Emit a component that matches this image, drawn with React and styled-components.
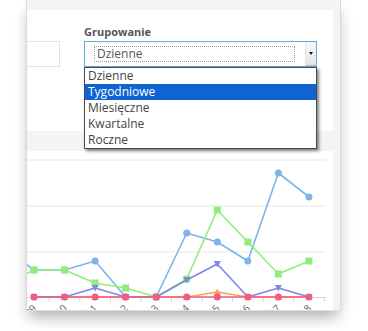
import React from "react";
import styled, { createGlobalStyle } from "styled-components";

const GlobalStyle = createGlobalStyle`
  html, body {
    margin: 0;
    padding: 0;
    background: #fff;
  }
  body {
    font-family: "Open Sans", "Liberation Sans", sans-serif;
  }
`;

const Stage = styled.div`
  width: 368px;
  height: 331px;
  overflow: hidden;
  background: #fff;
  padding-left: 26px;
  box-sizing: border-box;
`;

const Panel = styled.div`
  width: 315px;
  height: 311px;
  box-sizing: border-box;
  border-left: 1px solid #d8d8d8;
  border-right: 1px solid #d8d8d8;
  border-bottom: 1px solid #e0e0e0;
  background: #f4f4f4;
  box-shadow: 0 9px 14px -3px rgba(0, 0, 0, 0.32);
  padding: 10px 7px 0 0;
  display: flex;
  flex-direction: column;
  gap: 20px;
`;

const FilterCard = styled.div`
  height: 121px;
  flex-shrink: 0;
  background: #fff;
  display: flex;
  align-items: flex-start;
  gap: 24px;
  padding-top: 14px;
  box-sizing: border-box;
`;

const Field = styled.div`
  display: flex;
  flex-direction: column;
  gap: 2px;
  position: relative;
`;

const Label = styled.label`
  font-size: 11px;
  font-weight: 700;
  line-height: 15px;
  color: #555;
`;

const TextInput = styled.div`
  width: 33px;
  height: 26px;
  margin-top: 17px;
  box-sizing: border-box;
  border: 1px solid #e2e2e2;
  border-left: none;
  background: #fff;
`;

const SelectBox = styled.div`
  width: 233px;
  height: 26px;
  box-sizing: border-box;
  border: 1px solid #62acd9;
  background: #fff;
  display: flex;
  align-items: center;
  padding-left: 9px;
`;

const SelectValue = styled.div`
  width: 201px;
  height: 16px;
  box-sizing: border-box;
  border: 1px dotted #9a9a9a;
  padding-left: 2px;
  font-size: 12px;
  line-height: 14px;
  color: #555;
`;

const ArrowButton = styled.div`
  margin-left: auto;
  width: 11px;
  height: 24px;
  background: linear-gradient(#f8f8f8, #e4e4e4);
  border-left: 1px solid #e6e6e6;
  border-bottom: 1px solid #bbb;
  box-sizing: border-box;
  display: flex;
  align-items: center;
  justify-content: center;
  &::after {
    content: "";
    border-left: 2.5px solid transparent;
    border-right: 2.5px solid transparent;
    border-top: 3px solid #111;
  }
`;

const OptionList = styled.ul`
  position: absolute;
  top: 43px;
  left: 0;
  width: 233px;
  margin: 0;
  padding: 0;
  list-style: none;
  box-sizing: border-box;
  border: 1px solid #4a4a4a;
  background: #fff;
  box-shadow: 2px 2px 3px rgba(0, 0, 0, 0.5);
  z-index: 2;
`;

const Option = styled.li`
  height: 16px;
  padding-left: 3px;
  font-size: 12px;
  line-height: 16px;
  color: ${({ $active }) => ($active ? "#fff" : "#444")};
  background: ${({ $active }) => ($active ? "#0f63d3" : "transparent")};
`;

const ChartCard = styled.div`
  flex: 1;
  background: #fff;
  overflow: hidden;
`;

const COLORS = {
  blue: "#7cb5ec",
  green: "#90ed7d",
  orange: "#f7a35c",
  purple: "#8085e9",
  pink: "#f15c80",
};

const xs = Array.from({ length: 10 }, (_, i) => 7 + i * 30.55);
const labels = ["2019-09", "2019-10", "2019-11", "2019-12", "2019-13", "2019-14", "2019-15", "2019-16", "2019-17", "2019-18"];

const series = [
  { color: COLORS.blue, symbol: "circle", prev: 96, data: [119, 119, 110, 146, 146, 82, 91, 110, 22, 46] },
  { color: COLORS.green, symbol: "square", prev: 134, data: [119, 119, 132, 137, 146, 128, 59, 91, 123, 110] },
  { color: COLORS.orange, symbol: "triangle", data: [146, 146, 146, 146, 146, 146, 141, 146, 146, 146] },
  { color: COLORS.purple, symbol: "triangle-down", data: [146, 146, 137, 146, 146, 129, 113, 146, 137, 146] },
  { color: COLORS.pink, symbol: "circle", data: [146, 146, 146, 146, 146, 146, 146, 146, 146, 146] },
];

const options = ["Dzienne", "Tygodniowe", "Miesięczne", "Kwartalne", "Roczne"];

function Marker({ x, y, symbol, color }) {
  if (symbol === "square") return <rect x={x - 3.5} y={y - 3.5} width="7" height="7" fill={color} />;
  if (symbol === "triangle") return <path d={`M${x} ${y - 3.5} L${x + 3.5} ${y + 3} L${x - 3.5} ${y + 3} Z`} fill={color} />;
  if (symbol === "triangle-down") return <path d={`M${x - 3.5} ${y - 3} L${x + 3.5} ${y - 3} L${x} ${y + 3.5} Z`} fill={color} />;
  return <circle cx={x} cy={y} r="3.5" fill={color} />;
}

function Chart() {
  return (
    <svg width="306" height="160" viewBox="0 0 306 160">
      {[9, 55, 101].map((y) => (
        <line key={y} x1="0" x2="299" y1={y} y2={y} stroke="#e6e6e6" strokeWidth="1" />
      ))}
      <line x1="0" x2="299" y1="146.5" y2="146.5" stroke="#ccd6eb" />
      {xs.map((x, i) => (
        <line key={i} x1={x + 15.3} x2={x + 15.3} y1="146" y2="151" stroke="#ccd6eb" />
      ))}
      {xs.map((x, i) => (
        <text
          key={i}
          x={x + 3}
          y="158"
          fontSize="10"
          fill="#666"
          textAnchor="end"
          fontFamily="Open Sans, sans-serif"
          transform={`rotate(-45 ${x + 3} 158)`}
        >
          {labels[i]}
        </text>
      ))}
      {series.map((s, si) => {
        const pts = s.data.map((y, i) => `${xs[i]},${y}`);
        if (s.prev !== undefined) pts.unshift(`${xs[0] - 30.55},${s.prev}`);
        return (
          <g key={si}>
            <polyline points={pts.join(" ")} fill="none" stroke={s.color} strokeWidth="1.6" strokeLinejoin="round" />
            {s.data.map((y, i) => (
              <Marker key={i} x={xs[i]} y={y} symbol={s.symbol} color={s.color} />
            ))}
          </g>
        );
      })}
    </svg>
  );
}

export default function App() {
  return (
    <>
      <GlobalStyle />
      <Stage>
        <Panel>
          <FilterCard>
            <Field>
              <TextInput />
            </Field>
            <Field>
              <Label>Grupowanie</Label>
              <SelectBox>
                <SelectValue>Dzienne</SelectValue>
                <ArrowButton />
              </SelectBox>
              <OptionList>
                {options.map((o) => (
                  <Option key={o} $active={o === "Tygodniowe"}>
                    {o}
                  </Option>
                ))}
              </OptionList>
            </Field>
          </FilterCard>
          <ChartCard>
            <Chart />
          </ChartCard>
        </Panel>
      </Stage>
    </>
  );
}
